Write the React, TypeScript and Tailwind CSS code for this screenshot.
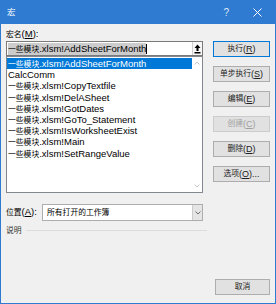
import React from "react";

const macros = [
  "一些模块.xlsm!AddSheetForMonth",
  "CalcComm",
  "一些模块.xlsm!CopyTextfile",
  "一些模块.xlsm!DelASheet",
  "一些模块.xlsm!GotDates",
  "一些模块.xlsm!GoTo_Statement",
  "一些模块.xlsm!IsWorksheetExist",
  "一些模块.xlsm!Main",
  "一些模块.xlsm!SetRangeValue",
];

// CJK runs are drawn a bit smaller, like the squeezed dialog font
const T = ({ text }: { text: string }) => {
  const parts = text.split(/([\u4e00-\u9fff]+)/).filter(Boolean);
  return (
    <>
      {parts.map((p, i) =>
        /[\u4e00-\u9fff]/.test(p) ? (
          <span key={i} className="text-[7.8px]">{p}</span>
        ) : (
          <span key={i}>{p}</span>
        )
      )}
    </>
  );
};

const Btn = ({
  zh,
  hot,
  tail = "",
  primary,
  disabled,
}: {
  zh: string;
  hot?: string;
  tail?: string;
  primary?: boolean;
  disabled?: boolean;
}) => (
  <button
    className={`h-[16px] w-full flex items-center justify-center border bg-[#e1e1e1] text-[9px] leading-none ${
      primary ? "border-[#0078d7] text-[#222]" : disabled ? "border-[#cccccc] text-[#a0a0a0]" : "border-[#adadad] text-[#222]"
    }`}
  >
    <span className="text-[7.8px]">{zh}</span>
    {hot && (
      <span>
        (<span className="underline">{hot}</span>)
      </span>
    )}
    {tail}
  </button>
);

export default function App() {
  return (
    <div className="w-[276px] h-[304px] flex flex-col bg-[#f0f0f0] border-x border-b border-[#2f7bd1] font-['Liberation_Sans','Noto_Sans_CJK_SC',sans-serif] text-[9.5px] text-black overflow-hidden">
      <div className="h-[24px] shrink-0 bg-[#2f7bd1] flex items-center text-white pl-[6px] pr-[10px]">
        <span className="text-[8.5px]">宏</span>
        <span className="ml-auto mr-[24px] text-[10px] text-[#dce9f7]">?</span>
        <svg width="9" height="9" viewBox="0 0 9 9" className="mr-[3px]">
          <path d="M0.5 0.5 L8.5 8.5 M8.5 0.5 L0.5 8.5" stroke="#ffffff" strokeWidth="1" />
        </svg>
      </div>

      <div className="flex-1 flex flex-col px-[5px]">
        <div className="mt-[3px] h-[14px] leading-[14px]">
          <span className="text-[7.8px]">宏名</span>(<span className="underline">M</span>):
        </div>

        <div className="flex gap-[10px]">
          <div className="w-[197px] flex flex-col">
            <div className="h-[15px] flex border border-[#7a7a7a] bg-white">
              <div className="flex-1 flex items-center pl-[1px]">
                <span className="bg-[#cccccc] leading-[11px]">
                  <T text={macros[0]} />
                </span>
                <span className="w-px h-[10px] bg-black" />
              </div>
              <div className="w-[10px] flex items-center justify-center border-l border-[#cfcfcf] bg-[#f7f7f7]">
                <svg width="7" height="10" viewBox="0 0 7 10">
                  <path d="M3.5 0.5 L6.5 4 L4.5 4 L4.5 7 L2.5 7 L2.5 4 L0.5 4 Z" fill="#000" />
                  <rect x="0.5" y="8" width="6" height="1.5" fill="#000" />
                </svg>
              </div>
            </div>

            <div className="h-[137px] flex border border-[#828790] bg-white">
              <div className="flex-1 flex flex-col pt-[1px]">
                {macros.map((m, i) => (
                  <div
                    key={m}
                    className={`h-[11.2px] leading-[11.2px] pl-[1px] whitespace-nowrap ${
                      i === 0 ? "bg-[#0078d7] text-white" : ""
                    }`}
                  >
                    <T text={m} />
                  </div>
                ))}
              </div>
              <div className="w-[10px] flex flex-col items-center justify-between py-[4px]">
                <svg width="6" height="4" viewBox="0 0 6 4">
                  <path d="M0.5 3.5 L3 1 L5.5 3.5" fill="none" stroke="#c2c2c2" strokeWidth="0.9" />
                </svg>
                <svg width="6" height="4" viewBox="0 0 6 4">
                  <path d="M0.5 0.5 L3 3 L5.5 0.5" fill="none" stroke="#c2c2c2" strokeWidth="0.9" />
                </svg>
              </div>
            </div>

            <div className="mt-[11px] h-[17px] flex items-center">
              <div className="w-[36px]">
                <span className="text-[7.8px]">位置</span>(<span className="underline">A</span>):
              </div>
              <div className="flex-1 h-full flex border border-[#adadad] bg-white">
                <div className="flex-1 flex items-center pl-[4px] text-[7.8px]">所有打开的工作簿</div>
                <div className="w-[10px] flex items-center justify-center bg-[#e5e5e5] border-l border-[#cccccc]">
                  <svg width="6" height="4" viewBox="0 0 6 4">
                    <path d="M0.5 0.5 L3 3 L5.5 0.5" fill="none" stroke="#606060" strokeWidth="0.9" />
                  </svg>
                </div>
              </div>
            </div>
          </div>

          <div className="w-[57px] flex flex-col gap-[9px]">
            <Btn zh="执行" hot="R" primary />
            <Btn zh="单步执行" hot="S" />
            <Btn zh="编辑" hot="E" />
            <Btn zh="创建" hot="C" disabled />
            <Btn zh="删除" hot="D" />
            <Btn zh="选项" hot="O" tail="..." />
          </div>
        </div>

        <div className="mt-[4px] w-[201px] flex items-center gap-[4px]">
          <span className="text-[7.8px] text-[#333]">说明</span>
          <div className="flex-1 h-px bg-[#dcdcdc]" />
        </div>

        <div className="mt-auto mb-[8px] flex justify-end">
          <button className="w-[55px] h-[16px] border border-[#adadad] bg-[#e1e1e1] text-[7.8px] text-[#222]">取消</button>
        </div>
      </div>
    </div>
  );
}
